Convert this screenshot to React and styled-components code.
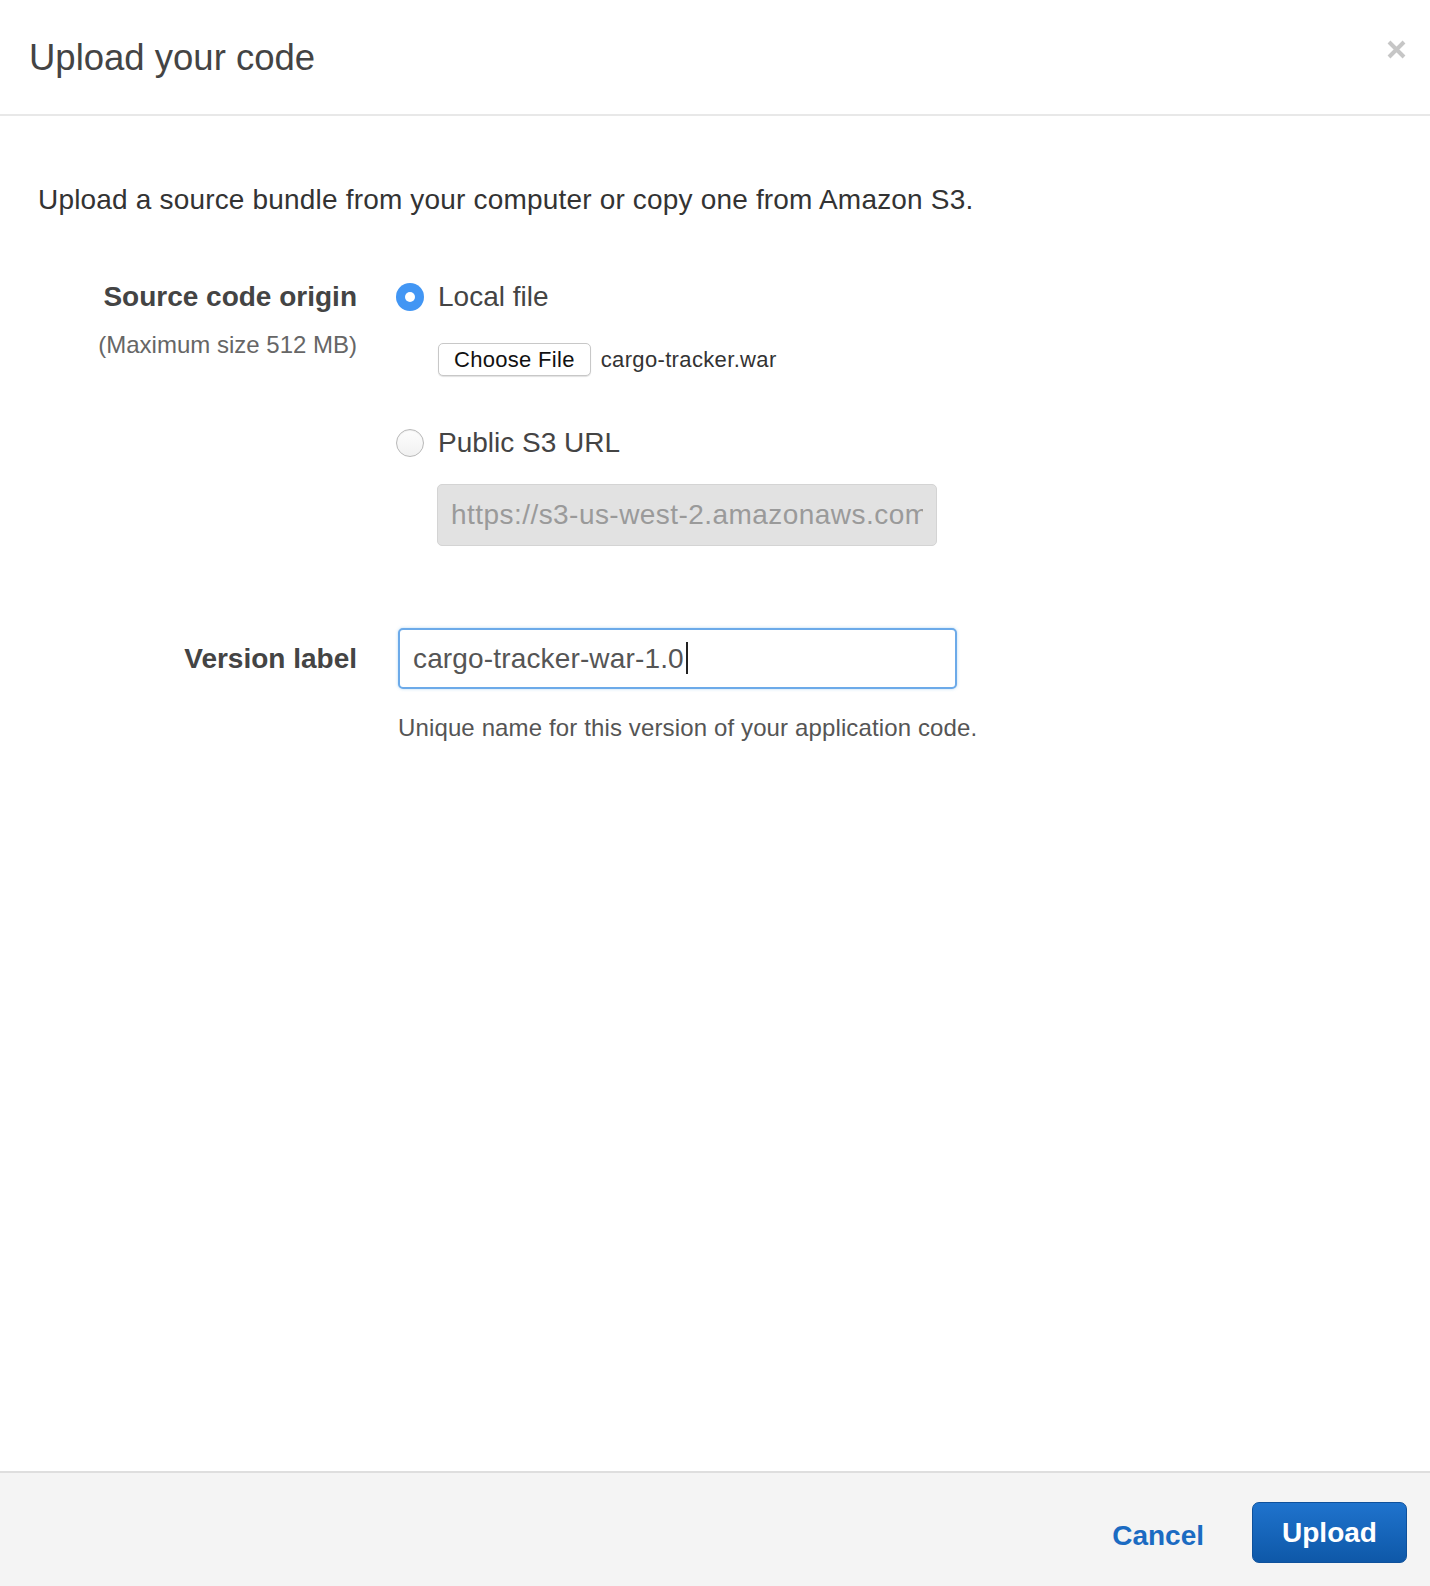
import React from "react";
import styled, { createGlobalStyle } from "styled-components";

const Global = createGlobalStyle`
  html, body { margin: 0; padding: 0; background: #fff; }
  body { font-family: "Liberation Sans", Arial, Helvetica, sans-serif; }
  * { box-sizing: border-box; }
`;

const Modal = styled.div`
  height: 100vh;
  min-height: 1586px;
  display: flex;
  flex-direction: column;
  background: #fff;
`;

const Header = styled.header`
  height: 116px;
  border-bottom: 2px solid #e8e8e8;
  display: flex;
  align-items: flex-start;
  justify-content: space-between;
  padding: 36px 24px 0 29px;
`;

const Title = styled.h1`
  margin: 0;
  font-size: 36.5px;
  line-height: 44px;
  font-weight: 400;
  color: #444;
`;

const Close = styled.button`
  margin-top: 4px;
  width: 19px;
  height: 19px;
  padding: 0;
  border: 0;
  background: none;
  display: flex;
`;

const Body = styled.main`
  flex: 1;
  padding: 67px 24px 0 38px;
  display: flex;
  flex-direction: column;
`;

const Intro = styled.p`
  margin: 0 0 63px;
  font-size: 28px;
  letter-spacing: 0.18px;
  line-height: 34px;
  color: #333;
`;

const FormRow = styled.div`
  display: grid;
  grid-template-columns: 319px 1fr;
  column-gap: 39px;
  align-items: ${(p) => (p.$center ? "center" : "start")};
  margin-bottom: ${(p) => p.$mb || 0}px;
`;

const LabelCol = styled.div`
  text-align: right;
  display: flex;
  flex-direction: column;
  align-items: flex-end;
`;

const Label = styled.label`
  font-size: 28px;
  line-height: 34px;
  font-weight: 700;
  color: #444;
`;

const SubLabel = styled.div`
  margin-top: 16px;
  font-size: 24px;
  line-height: 30px;
  color: #666;
`;

const Controls = styled.div`
  display: flex;
  flex-direction: column;
`;

const RadioRow = styled.div`
  display: flex;
  align-items: center;
  gap: 14px;
  height: 34px;
`;

const RadioDot = styled.span`
  width: 28px;
  height: 28px;
  border-radius: 50%;
  flex: none;
  display: flex;
  align-items: center;
  justify-content: center;
  background: ${(p) => (p.$checked ? "#4296f4" : "linear-gradient(#fdfdfd, #f1f1f1)")};
  border: ${(p) => (p.$checked ? "none" : "1.5px solid #b9b9b9")};
  box-shadow: ${(p) => (p.$checked ? "none" : "inset 0 1px 1px rgba(0,0,0,0.06)")};
  &::after {
    content: "";
    display: ${(p) => (p.$checked ? "block" : "none")};
    width: 10px;
    height: 10px;
    border-radius: 50%;
    background: #fff;
  }
`;

const RadioText = styled.span`
  font-size: 28px;
  line-height: 34px;
  color: #444;
`;

const FileRow = styled.div`
  display: flex;
  align-items: center;
  gap: 10px;
  margin: 29px 0 50px 42px;
`;

const FileButton = styled.button`
  height: 33px;
  padding: 0 15px;
  font-family: inherit;
  font-size: 22px;
  letter-spacing: 0.3px;
  color: #111;
  background: #fff;
  border: 1px solid #c8c8c8;
  border-radius: 5px;
  box-shadow: 0 1px 1px rgba(0, 0, 0, 0.12);
`;

const FileName = styled.span`
  font-size: 22px;
  letter-spacing: 0.35px;
  color: #333;
`;

const TextInput = styled.input`
  display: block;
  height: ${(p) => p.$h || 62}px;
  width: ${(p) => p.$w}px;
  margin-left: ${(p) => p.$ml || 0}px;
  margin-top: ${(p) => p.$mt || 0}px;
  padding: 0 13px;
  font-family: inherit;
  font-size: 28px;
  letter-spacing: ${(p) => (p.disabled ? "0.45px" : "0.15px")};
  color: #555;
  background: ${(p) => (p.disabled ? "#e2e2e2" : "#fff")};
  border: ${(p) => (p.disabled ? "1.5px solid #d4d4d4" : "2px solid #6caae9")};
  border-radius: 5px;
  outline: none;
  box-shadow: ${(p) => (p.disabled ? "none" : "0 0 3px rgba(102,175,233,0.5)")};
  &::placeholder { color: #9a9a9a; }
`;

const Caret = styled.span`
  position: absolute;
  left: 288px;
  top: 14px;
  width: 1.5px;
  height: 32px;
  background: #222;
`;

const InputWrap = styled.div`
  position: relative;
  margin-left: 2px;
`;

const Help = styled.div`
  margin: 24px 0 0 2px;
  font-size: 24px;
  letter-spacing: 0.13px;
  line-height: 30px;
  color: #555;
`;

const Footer = styled.footer`
  border-top: 2px solid #dedede;
  background: #f4f4f4;
  height: 115px;
  display: flex;
  align-items: flex-start;
  justify-content: flex-end;
  gap: 48px;
  padding: 29px 23px 0 0;
`;

const LinkButton = styled.button`
  height: 61px;
  padding: 0;
  border: 0;
  background: none;
  font-family: inherit;
  font-size: 28px;
  font-weight: 700;
  color: #1b6bc2;
  margin-top: 3px;
`;

const PrimaryButton = styled.button`
  height: 61px;
  width: 155px;
  border-radius: 7px;
  border: 1px solid #0e519c;
  background: linear-gradient(#1f73cd, #0e58a8);
  color: #fff;
  font-family: inherit;
  font-size: 28px;
  font-weight: 700;
`;

export default function App() {
  return (
    <>
      <Global />
      <Modal>
        <Header>
          <Title>Upload your code</Title>
          <Close aria-label="Close">
            <svg width="19" height="19" viewBox="0 0 19 19">
              <path d="M2 2 L17 17 M17 2 L2 17" stroke="#c6c6c6" strokeWidth="4" />
            </svg>
          </Close>
        </Header>
        <Body>
          <Intro>Upload a source bundle from your computer or copy one from Amazon S3.</Intro>
          <FormRow $mb={82}>
            <LabelCol>
              <Label>Source code origin</Label>
              <SubLabel>(Maximum size 512 MB)</SubLabel>
            </LabelCol>
            <Controls>
              <RadioRow>
                <RadioDot $checked />
                <RadioText>Local file</RadioText>
              </RadioRow>
              <FileRow>
                <FileButton>Choose File</FileButton>
                <FileName>cargo-tracker.war</FileName>
              </FileRow>
              <RadioRow>
                <RadioDot />
                <RadioText>Public S3 URL</RadioText>
              </RadioRow>
              <TextInput
                disabled
                $w={500}
                $ml={41}
                $mt={24}
                placeholder="https://s3-us-west-2.amazonaws.com/bucket/key"
              />
            </Controls>
          </FormRow>
          <FormRow $center>
            <LabelCol>
              <Label>Version label</Label>
            </LabelCol>
            <InputWrap>
              <TextInput $w={559} $h={61} defaultValue="cargo-tracker-war-1.0" readOnly />
              <Caret />
            </InputWrap>
          </FormRow>
          <FormRow>
            <div />
            <Help>Unique name for this version of your application code.</Help>
          </FormRow>
        </Body>
        <Footer>
          <LinkButton>Cancel</LinkButton>
          <PrimaryButton>Upload</PrimaryButton>
        </Footer>
      </Modal>
    </>
  );
}
